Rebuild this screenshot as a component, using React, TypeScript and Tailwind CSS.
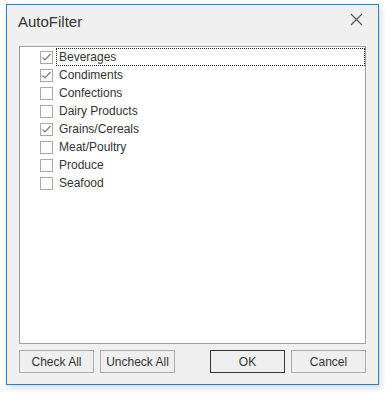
import React, { useState } from "react";

const categories = [
  { name: "Beverages", checked: true },
  { name: "Condiments", checked: true },
  { name: "Confections", checked: false },
  { name: "Dairy Products", checked: false },
  { name: "Grains/Cereals", checked: true },
  { name: "Meat/Poultry", checked: false },
  { name: "Produce", checked: false },
  { name: "Seafood", checked: false },
];

function CheckBox({ checked }: { checked: boolean }) {
  return (
    <span className="w-[13px] h-[13px] border border-[#a8a8a8] bg-white flex items-center justify-center shrink-0">
      {checked && (
        <svg width="11" height="11" viewBox="0 0 11 11">
          <polyline
            points="1.5,5.5 4,8 9.5,2"
            fill="none"
            stroke="#7a7a7a"
            strokeWidth="1.2"
          />
        </svg>
      )}
    </span>
  );
}

export default function App() {
  const [items, setItems] = useState(categories);
  const [focused, setFocused] = useState(0);

  const toggle = (i: number) => {
    setFocused(i);
    setItems(items.map((it, idx) => (idx === i ? { ...it, checked: !it.checked } : it)));
  };

  const btn =
    "w-[75px] h-[23px] bg-[#efefef] text-[12px] text-[#333] flex items-center justify-center";

  return (
    <div
      className="w-[385px] h-[394px] bg-white pt-[4px] pl-[6px]"
      style={{ fontFamily: '"Liberation Sans", Arial, sans-serif' }}
    >
      <div className="w-[373px] h-[381px] border border-[#1883d7] bg-[#f0f0f0] flex flex-col shadow-[2px_3px_6px_rgba(0,0,0,0.15)]">
        <div className="h-[41px] flex items-start justify-between pl-[11px] pr-[15px] pt-[6px]">
          <span className="text-[15px] text-[#333]">AutoFilter</span>
          <svg width="13" height="13" viewBox="0 0 13 13" className="mt-[2px]">
            <path d="M1 1 L12 12 M12 1 L1 12" stroke="#555" strokeWidth="1.1" />
          </svg>
        </div>
        <div className="mx-[12px] h-[298px] border border-[#a0a0a0] bg-white pt-[1px]">
          {items.map((it, i) => (
            <div
              key={it.name}
              className="h-[18px] flex items-center pl-[20px] cursor-default"
              onClick={() => toggle(i)}
            >
              <CheckBox checked={it.checked} />
              <span
                className={
                  "ml-[3px] h-[18px] flex-1 flex items-center pl-[2px] text-[12px] text-[#333] border border-dotted " +
                  (focused === i ? "border-[#222]" : "border-transparent")
                }
              >
                {it.name}
              </span>
            </div>
          ))}
        </div>
        <div className="flex mt-[6px] mx-[12px]">
          <button className={btn + " border border-[#adadad]"} onClick={() => setItems(items.map((it) => ({ ...it, checked: true })))}>
            Check All
          </button>
          <button className={btn + " border border-[#adadad] ml-[6px]"} onClick={() => setItems(items.map((it) => ({ ...it, checked: false })))}>
            Uncheck All
          </button>
          <button className={btn + " border border-[#333] ml-auto"}>OK</button>
          <button className={btn + " border border-[#adadad] ml-[6px]"}>Cancel</button>
        </div>
      </div>
    </div>
  );
}
